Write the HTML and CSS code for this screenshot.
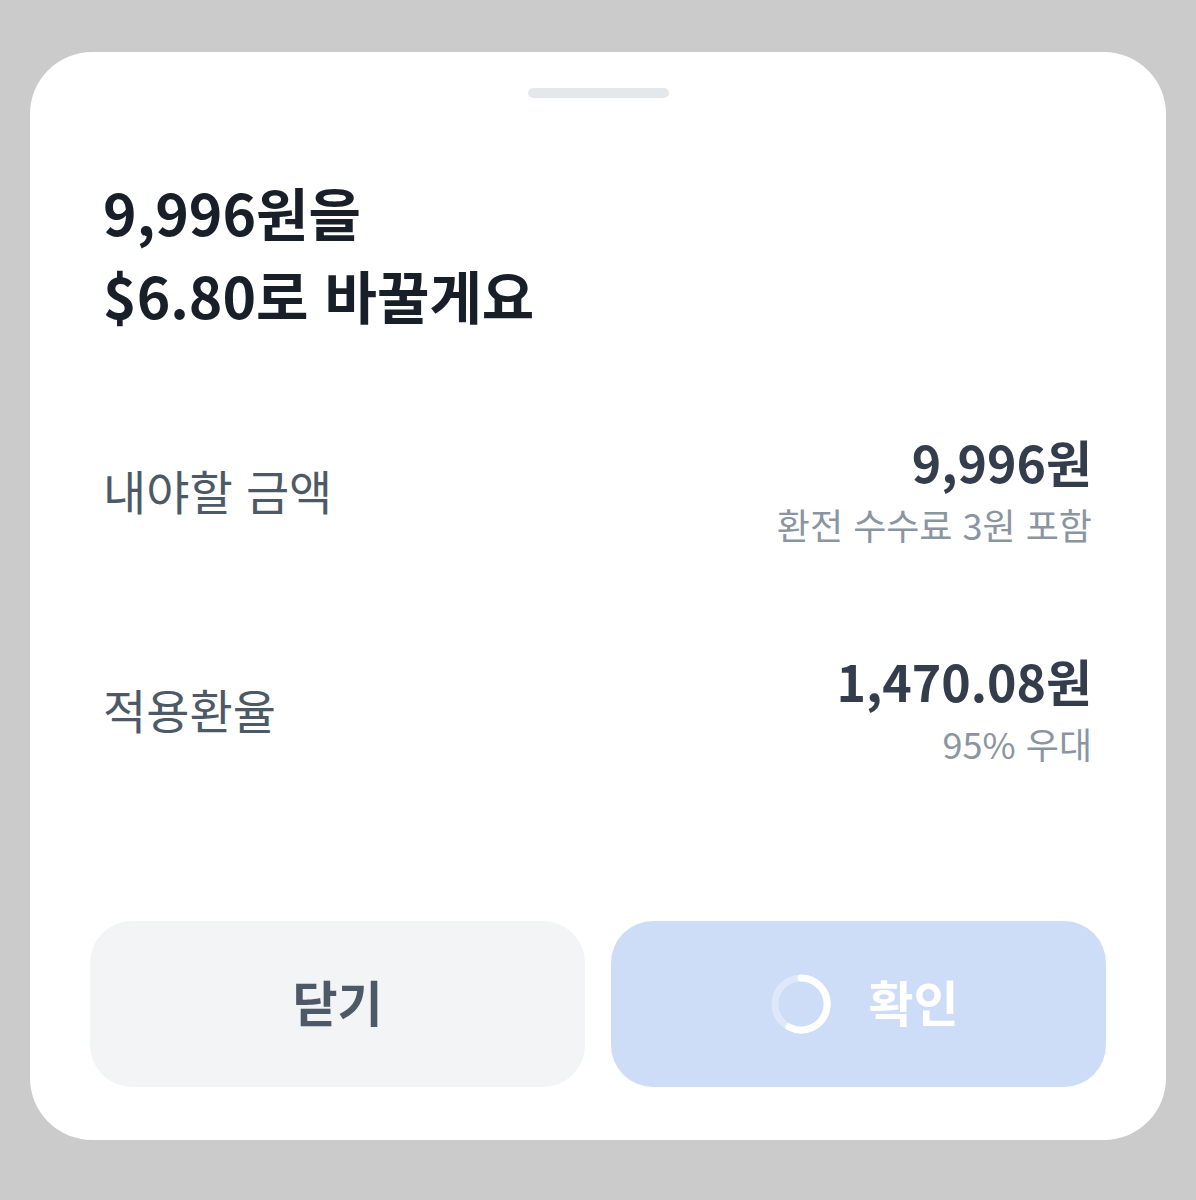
FILE: index.html
```html
<!DOCTYPE html>
<html lang="ko">
<head>
    <meta charset="UTF-8">
    <meta name="viewport" content="width=device-width, initial-scale=1.0">
    <title>환전 확인</title>
    <link rel="stylesheet" href="styles.css">
</head>
<body>
    <div class="sheet">
      <div class="handle"></div>

      <h1 class="title">9,996원을<br>$6.80로 바꿀게요</h1>

      <div class="rows">
        <div class="row">
          <span class="label">내야할 금액</span>
          <div class="value-box">
            <span class="value">9,996원</span>
            <span class="sub">환전 수수료 3원 포함</span>
          </div>
        </div>

        <div class="row">
          <span class="label">적용환율</span>
          <div class="value-box">
            <span class="value">1,470.08원</span>
            <span class="sub">95% 우대</span>
          </div>
        </div>
      </div>

      <!-- Bottom buttons -->
      <div class="actions">
        <button class="btn btn-close">닫기</button>
        <button class="btn btn-confirm">
          <svg class="spinner" width="62" height="62" viewBox="0 0 62 62">
            <circle cx="31" cy="31" r="26" fill="none" stroke="#ffffff" stroke-opacity="0.35" stroke-width="7"/>
            <path d="M31 5 A26 26 0 1 1 19 54" fill="none" stroke="#ffffff" stroke-width="7" stroke-linecap="round"/>
          </svg>
          <span>확인</span>
        </button>
      </div>
    </div>
</body>
</html>
```

FILE: styles.css
```css
/* General */
body {
    margin: 0;
    background: #cbcbcb;
    font-family: "Noto Sans CJK KR", "Noto Sans", sans-serif;
}

.sheet {
    margin: 52px 30px 0;
    height: 1088px;
    box-sizing: border-box;
    background: #ffffff;
    border-radius: 62px;
    padding: 36px 60px 0;
    display: flex;
    flex-direction: column;
}

.handle {
    align-self: center;
    width: 141px;
    height: 10px;
    border-radius: 5px;
    background: #e5e8eb;
}

.title {
    margin: 72px 0 0 13px;
    font-size: 57px;
    line-height: 83px;
    font-weight: 700;
    color: #191f28;
}

/* Detail rows */
.rows {
    margin: 94px 14px 0 13px;
    display: flex;
    flex-direction: column;
    gap: 93px;
}

.row {
    display: flex;
    justify-content: space-between;
    align-items: center;
}

.label {
    font-size: 47px;
    color: #4e5968;
    margin-top: -8px;
}

.value-box {
    display: flex;
    flex-direction: column;
    align-items: flex-end;
}

.value {
    font-size: 50px;
    line-height: 62px;
    font-weight: 700;
    color: #333d4b;
}

.sub {
    font-size: 36px;
    line-height: 64px;
    color: #8b95a1;
}

/* Buttons */
.actions {
    margin-top: auto;
    margin-bottom: 53px;
    display: grid;
    grid-template-columns: 1fr 1fr;
    gap: 26px;
}

.btn {
    height: 166px;
    padding: 0 0 8px;
    border: none;
    border-radius: 42px;
    font-family: inherit;
    font-size: 49px;
    font-weight: 700;
    display: flex;
    align-items: center;
    justify-content: center;
    gap: 36px;
}

.btn-close {
    background: #f2f4f6;
    color: #4e5968;
}

.btn-confirm {
    background: #cddcf7;
    color: #ffffff;
    padding-left: 12px;
}

.spinner {
    display: block;
    margin-top: 8px;
}
```
